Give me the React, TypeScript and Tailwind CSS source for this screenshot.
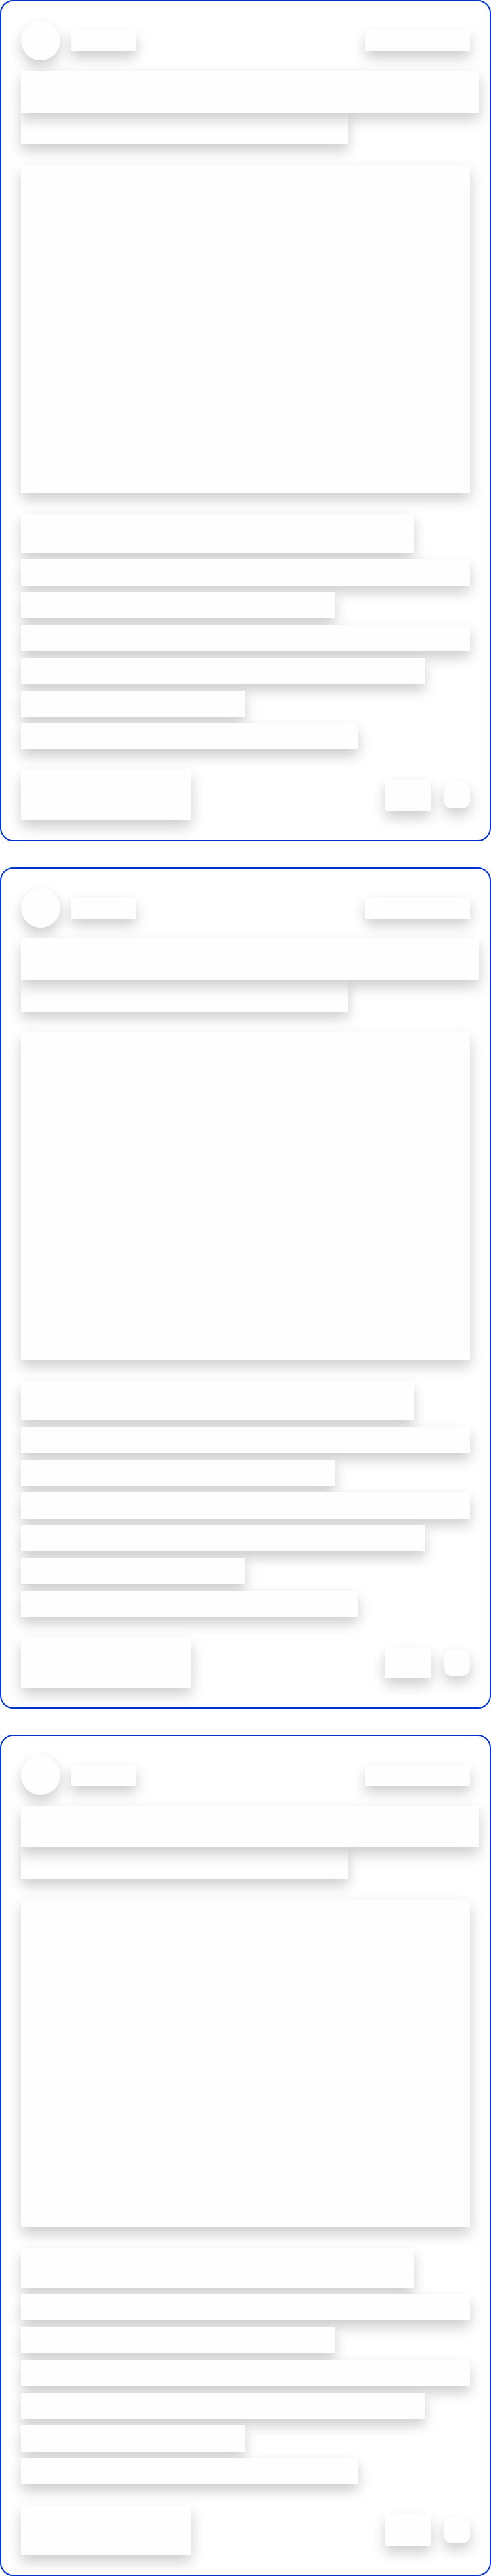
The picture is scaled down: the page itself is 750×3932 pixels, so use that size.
// Skeleton feed: three loading post cards stacked on a white page

import React from 'react';

const block = 'shrink-0 bg-[#fefefe] shadow-[0_10px_20px_rgba(0,0,0,0.2)]';

// Text line widths, relative to the 686px content column
const lines = ['w-full', 'w-[70%]', 'w-full', 'w-[90%]', 'w-1/2', 'w-3/4'];

const SkeletonCard: React.FC = () => {
  return (
    <div className="w-[750px] rounded-[20px] border-2 border-[#0033cc] bg-white p-[30px]">
      {/* Header: avatar, name, timestamp */}
      <div className="flex h-[60px] items-center justify-between">
        <div className="flex items-center gap-4">
          <div className={`${block} h-[60px] w-[60px] rounded-full`} />
          <div className={`${block} h-8 w-[100px]`} />
        </div>
        <div className={`${block} h-8 w-[160px]`} />
      </div>

      {/* Title and subtitle */}
      <div className="mt-4 flex flex-col">
        <div className={`${block} relative z-10 h-16 w-[700px]`} />
        <div className={`${block} h-12 w-[500px]`} />
      </div>

      {/* Media */}
      <div className={`${block} mt-8 h-[500px] w-full`} />

      {/* Body text */}
      <div className="mt-8 flex flex-col gap-[10px]">
        <div className={`${block} h-[60px] w-[600px]`} />
        {lines.map((w, i) => (
          <div key={i} className={`${block} h-10 ${w}`} />
        ))}
      </div>

      {/* Footer actions */}
      <div className="mt-8 flex items-center justify-between">
        <div className={`${block} h-[76px] w-[260px]`} />
        <div className="flex items-center gap-5">
          <div className={`${block} h-12 w-[70px]`} />
          <div className={`${block} h-10 w-10 rounded-xl`} />
        </div>
      </div>
    </div>
  );
};

export default function App() {
  return (
    <div className="flex min-h-screen w-[750px] flex-col gap-10 bg-white">
      <SkeletonCard />
      <SkeletonCard />
      <SkeletonCard />
    </div>
  );
}
